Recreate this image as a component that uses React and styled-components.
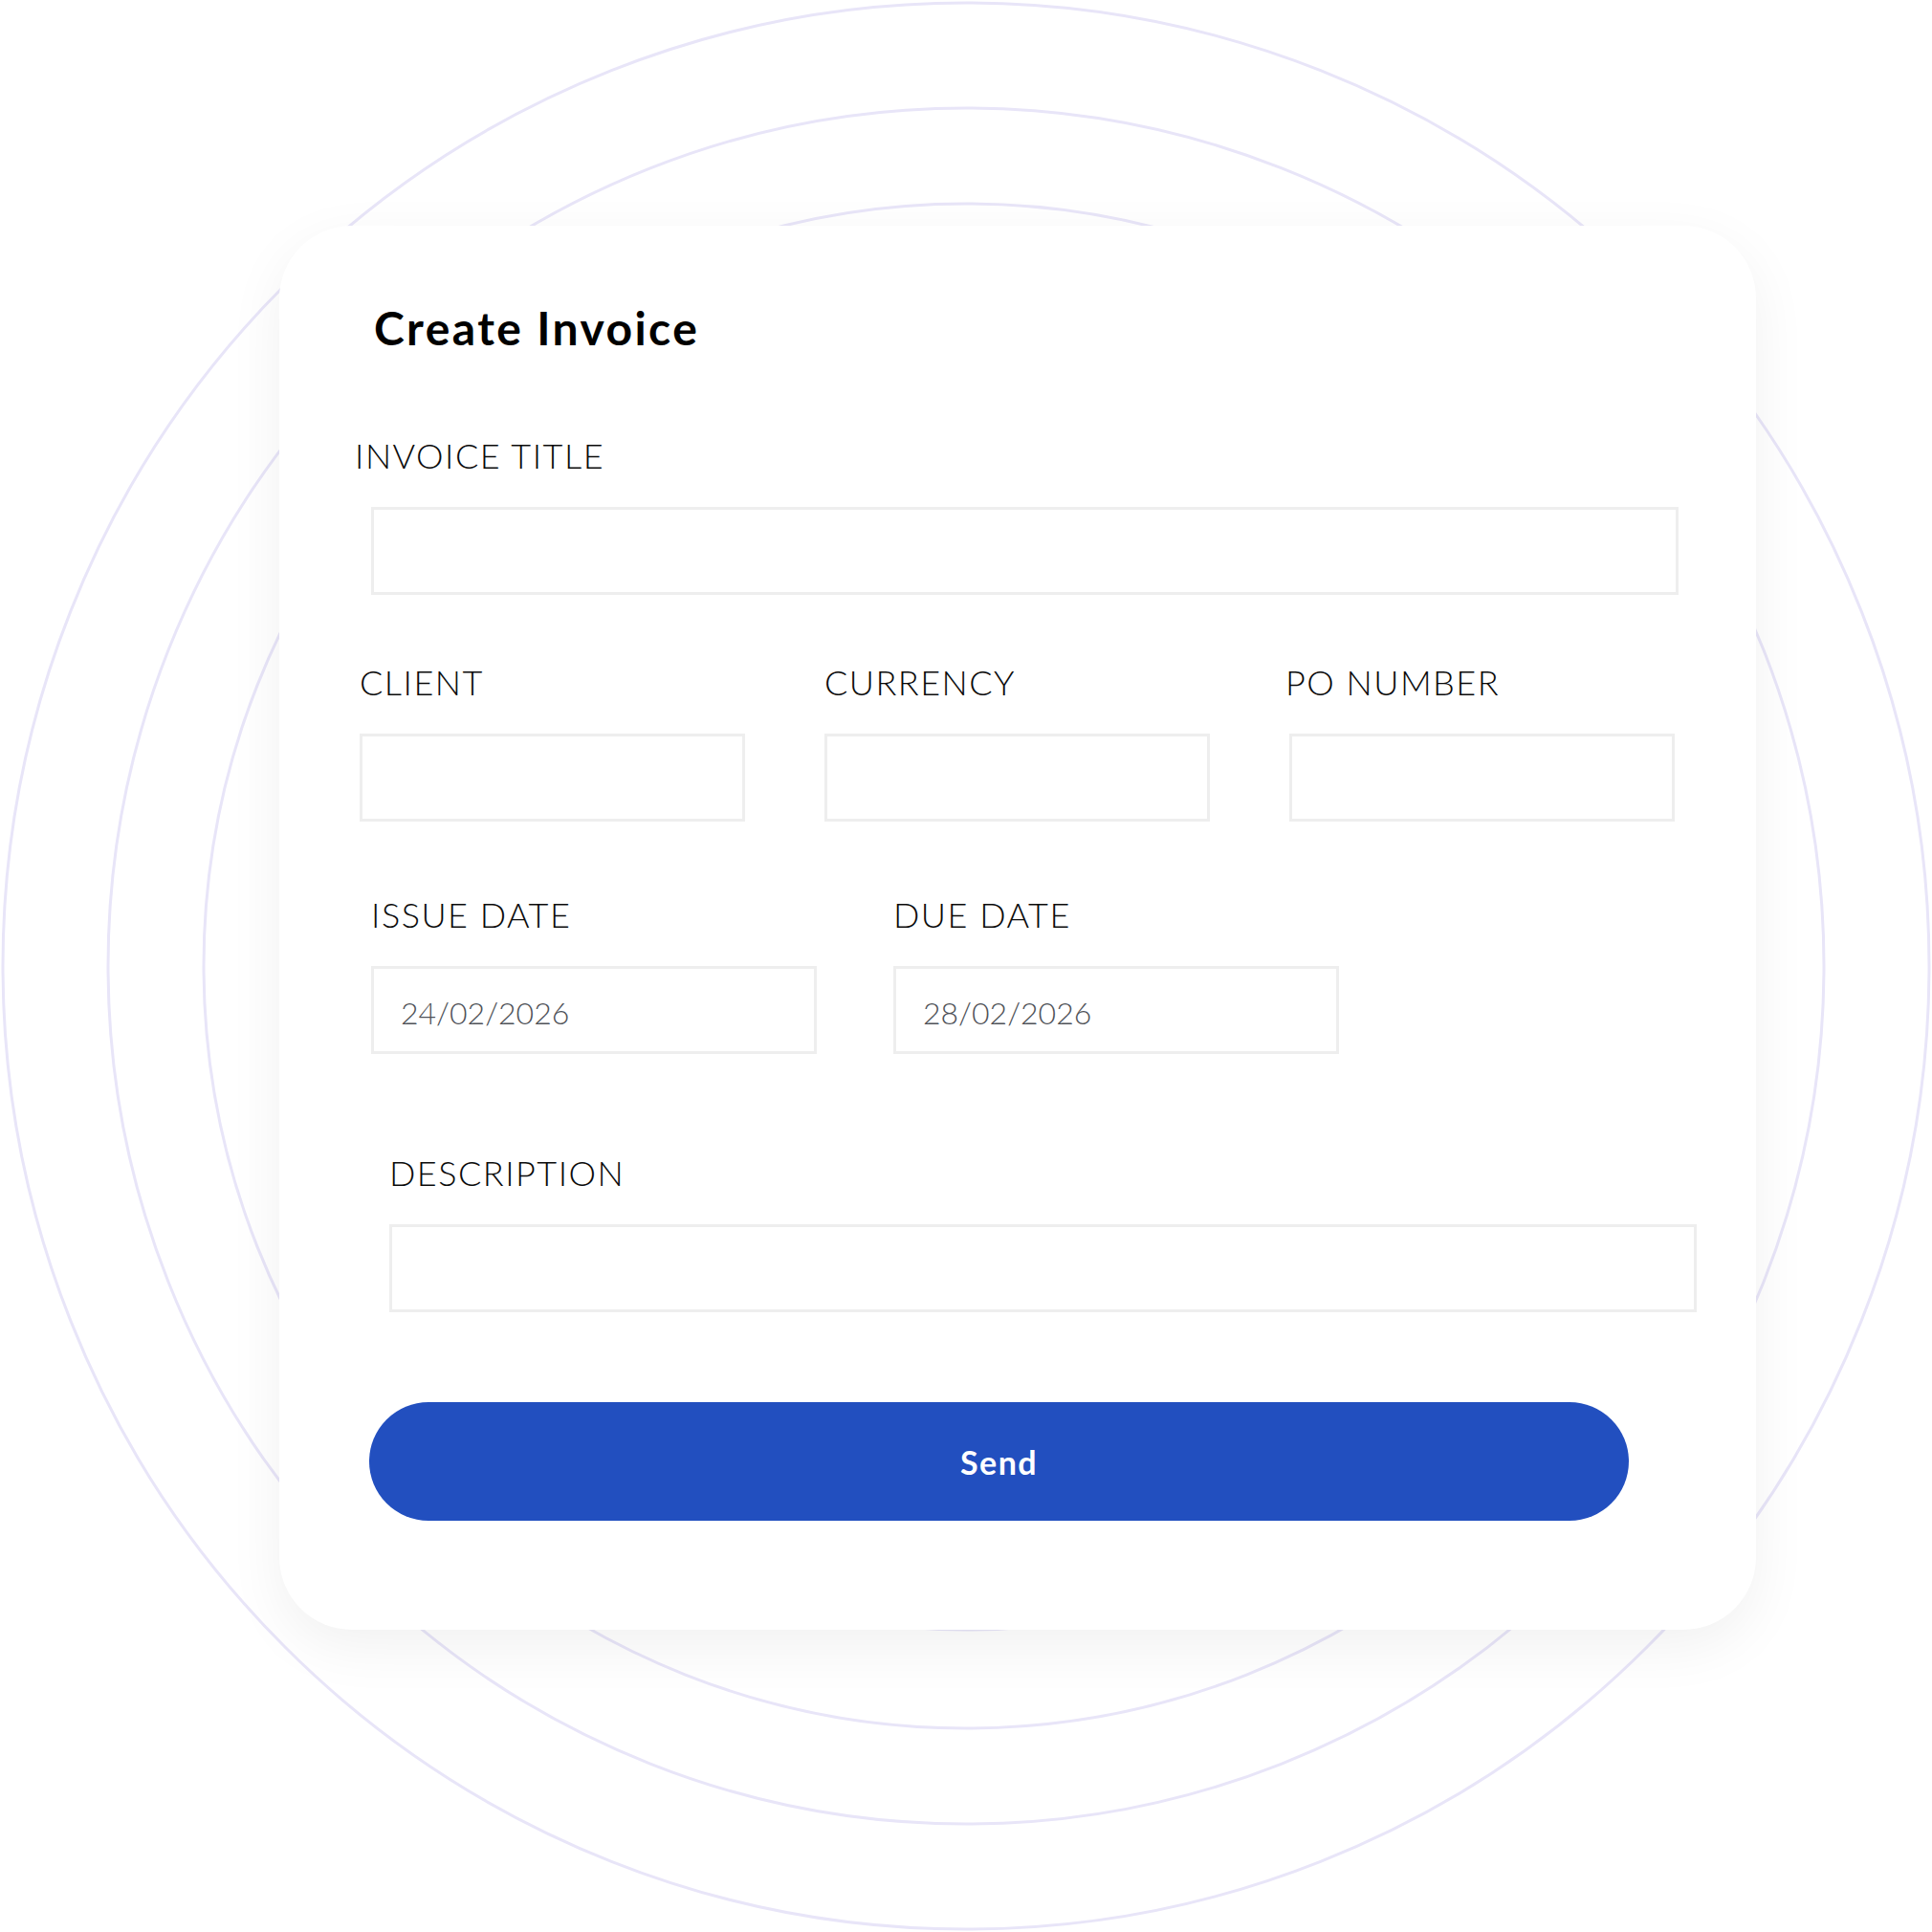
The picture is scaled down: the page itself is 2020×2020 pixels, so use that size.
import React from 'react'
import styled, { createGlobalStyle } from 'styled-components'

const GlobalStyle = createGlobalStyle`
  html, body {
    margin: 0;
    padding: 0;
    background: #ffffff;
  }
  body {
    font-family: 'Lato', 'Noto Sans', sans-serif;
  }
  * {
    box-sizing: border-box;
  }
`;

const Page = styled.div`
  position: relative;
  width: 2020px;
  height: 2020px;
  overflow: hidden;
  background: #ffffff;
  padding: 236px 0 0 292px;
`;

const Rings = styled.svg`
  position: absolute;
  top: 0;
  left: 0;
  width: 2020px;
  height: 2020px;
  z-index: 0;
`;

const Card = styled.section`
  position: relative;
  z-index: 1;
  width: 1544px;
  height: 1468px;
  background: #ffffff;
  border-radius: 76px;
  box-shadow: 0 18px 60px rgba(0, 0, 0, 0.06);
  padding-top: 83px;
  display: flex;
  flex-direction: column;
`;

const Title = styled.h1`
  margin: 0 0 0 99px;
  font-size: 48px;
  line-height: 1;
  font-weight: 700;
  letter-spacing: 2.4px;
  color: #000000;
`;

const Row = styled.div`
  display: flex;
  gap: ${props => props.$gap || 0}px;
  margin-top: ${props => props.$top}px;
  margin-left: ${props => props.$left}px;
`;

const Field = styled.div`
  display: flex;
  flex-direction: column;
  width: ${props => props.$width}px;
`;

const Label = styled.label`
  margin-left: ${props => props.$shift || 0}px;
  margin-bottom: 36px;
  font-size: 36px;
  line-height: 1;
  font-weight: 300;
  letter-spacing: 1.5px;
  color: #0b0b0b;
  text-transform: uppercase;
  white-space: nowrap;
`;

const Input = styled.input`
  width: 100%;
  height: 92px;
  margin: 0;
  padding: 4px 0 0 28px;
  border: 3px solid #eeeeee;
  border-radius: 0;
  background: #ffffff;
  font-family: 'Lato', 'Noto Sans', sans-serif;
  font-size: 32px;
  font-weight: 300;
  color: #4f5258;
  outline: none;
`;

const SendButton = styled.button`
  width: 1317px;
  height: 124px;
  margin: 94px 0 0 94px;
  border: 0;
  border-radius: 62px;
  background: #224fbf;
  color: #ffffff;
  font-family: 'Lato', 'Noto Sans', sans-serif;
  font-size: 34px;
  font-weight: 700;
  letter-spacing: 1.4px;
  cursor: pointer;
`;

const rings = [1007, 897, 797, 694];

export default function App() {
  return (
    <>
      <GlobalStyle />
      <Page>
        <Rings viewBox="0 0 2020 2020">
          {rings.map(r => (
            <circle key={r} cx="1010" cy="1010" r={r} fill="none" stroke="#e8e5f8" strokeWidth="3" />
          ))}
        </Rings>
        <Card>
          <Title>Create Invoice</Title>

          <Row $top={91} $left={96}>
            <Field $width={1367}>
              <Label $shift={-17}>Invoice Title</Label>
              <Input />
            </Field>
          </Row>

          <Row $top={73} $left={84} $gap={83}>
            <Field $width={403}>
              <Label>Client</Label>
              <Input />
            </Field>
            <Field $width={403}>
              <Label>Currency</Label>
              <Input />
            </Field>
            <Field $width={403}>
              <Label $shift={-4}>PO Number</Label>
              <Input />
            </Field>
          </Row>

          <Row $top={79} $left={96} $gap={80}>
            <Field $width={466}>
              <Label>Issue Date</Label>
              <Input defaultValue="24/02/2026" />
            </Field>
            <Field $width={466}>
              <Label>Due Date</Label>
              <Input defaultValue="28/02/2026" />
            </Field>
          </Row>

          <Row $top={106} $left={115}>
            <Field $width={1367}>
              <Label>Description</Label>
              <Input />
            </Field>
          </Row>

          <SendButton type="button">Send</SendButton>
        </Card>
      </Page>
    </>
  )
}
